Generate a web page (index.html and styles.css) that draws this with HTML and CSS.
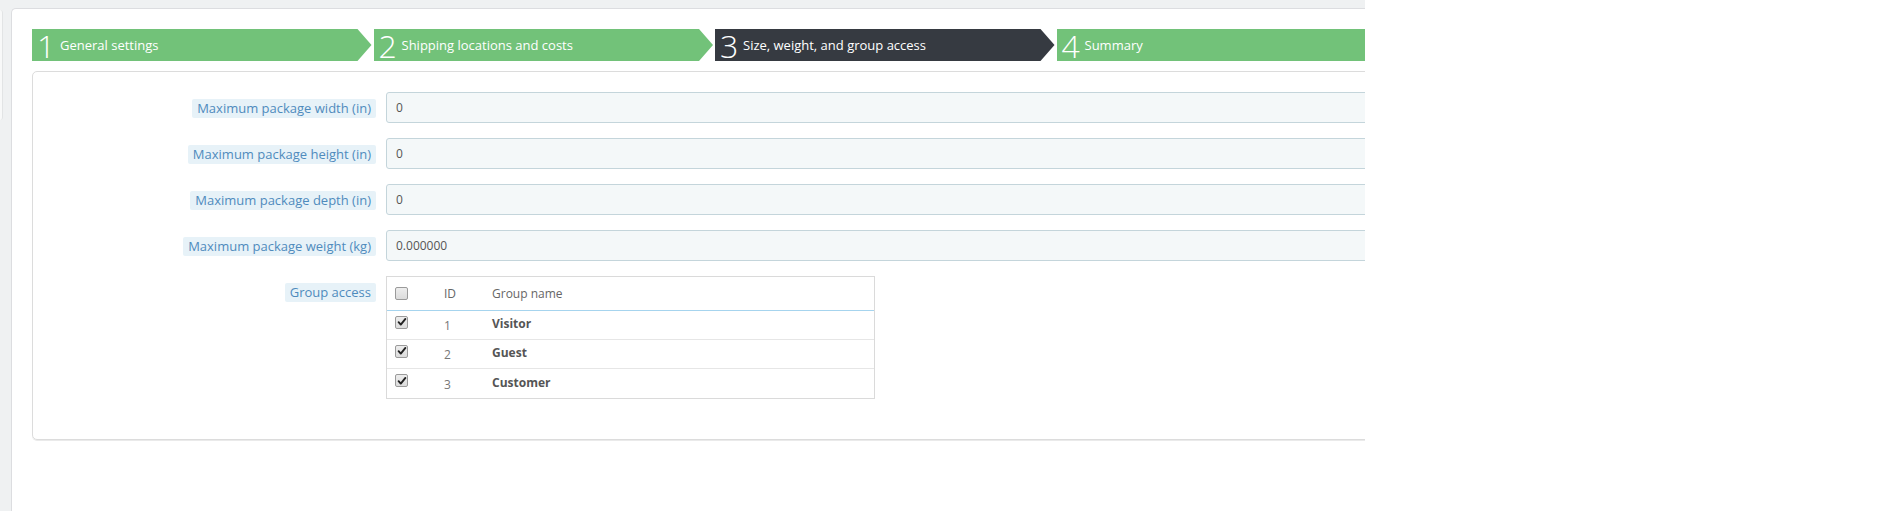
FILE: index.html
```html
<!DOCTYPE html>
<html lang="en">
<head>
<meta charset="utf-8">
<title>Carrier wizard</title>
<link rel="stylesheet" href="styles.css">
</head>
<body>
<div class="frame">
  <div class="edge"></div>
  <div class="page">
    <div class="wizard">
      <div class="step done"><span class="num">1</span><span class="txt">General settings</span></div>
      <div class="step done"><span class="num">2</span><span class="txt">Shipping locations and costs</span></div>
      <div class="step current"><span class="num">3</span><span class="txt">Size, weight, and group access</span></div>
      <div class="step done"><span class="num">4</span><span class="txt">Summary</span></div>
    </div>
    <div class="panel">
      <div class="form">
        <div class="lbl-col"><span class="lbl">Maximum package width (in)</span></div>
        <input class="field" type="text" value="0" readonly>
        <div class="lbl-col"><span class="lbl">Maximum package height (in)</span></div>
        <input class="field" type="text" value="0" readonly>
        <div class="lbl-col"><span class="lbl">Maximum package depth (in)</span></div>
        <input class="field" type="text" value="0" readonly>
        <div class="lbl-col"><span class="lbl">Maximum package weight (kg)</span></div>
        <input class="field" type="text" value="0.000000" readonly>
        <div class="lbl-col"><span class="lbl">Group access</span></div>
        <div class="tbl-wrap">
          <table class="groups">
            <colgroup><col class="c1"><col class="c2"><col></colgroup>
            <thead>
              <tr><th><span class="cb"></span></th><th>ID</th><th>Group name</th></tr>
            </thead>
            <tbody>
              <tr><td><span class="cb on"><svg viewBox="0 0 12 12" width="12" height="12"><path d="M2.6 6.2 L4.8 8.6 L9.4 2.9" fill="none" stroke="#222" stroke-width="1.9" stroke-linecap="round" stroke-linejoin="round"/></svg></span></td><td class="id"><span>1</span></td><td class="name">Visitor</td></tr>
              <tr><td><span class="cb on"><svg viewBox="0 0 12 12" width="12" height="12"><path d="M2.6 6.2 L4.8 8.6 L9.4 2.9" fill="none" stroke="#222" stroke-width="1.9" stroke-linecap="round" stroke-linejoin="round"/></svg></span></td><td class="id"><span>2</span></td><td class="name">Guest</td></tr>
              <tr class="last"><td><span class="cb on"><svg viewBox="0 0 12 12" width="12" height="12"><path d="M2.6 6.2 L4.8 8.6 L9.4 2.9" fill="none" stroke="#222" stroke-width="1.9" stroke-linecap="round" stroke-linejoin="round"/></svg></span></td><td class="id"><span>3</span></td><td class="name">Customer</td></tr>
            </tbody>
          </table>
        </div>
      </div>
    </div>
  </div>
</div>
</body>
</html>
```
FILE: styles.css
```css
html, body {
  margin: 0;
  padding: 0;
  background: #ffffff;
}
body {
  font-family: "Open Sans", "Liberation Sans", sans-serif;
  font-size: 12px;
  color: #555555;
}
.frame {
  width: 1365px;
  height: 511px;
  background: #eff1f2;
  display: flex;
  overflow: hidden;
}
.edge {
  flex: none;
  width: 2px;
  height: 110px;
  margin-top: 10px;
  margin-right: 8px;
  background: #f8f9f9;
  border-right: 1px solid #e2e4e5;
  border-radius: 0 3px 3px 0;
}
.page {
  flex: none;
  width: 1420px;
  margin-top: 8px;
  background: #ffffff;
  border-top: 1px solid #dcdde0;
  border-left: 1px solid #dcdde0;
  border-top-left-radius: 5px;
  padding: 20px 0 0 20px;
}
.wizard {
  display: flex;
  gap: 2px;
  height: 32px;
}
.step {
  flex: 0 0 339.5px;
  height: 32px;
  display: flex;
  align-items: center;
  background: #72c279;
  color: #ffffff;
  clip-path: polygon(0 0, calc(100% - 14px) 0, 100% 50%, calc(100% - 14px) 100%, 0 100%);
}
.step.current {
  background: #363a41;
}
.num {
  font-size: 32px;
  font-weight: 300;
  line-height: 32px;
  padding-left: 5px;
  margin-top: 2px;
  width: 23px;
}
.txt {
  font-size: 13px;
  line-height: 16px;
}
.panel {
  margin-top: 10px;
  width: 1400px;
  border: 1px solid #dcdcdc;
  border-radius: 5px;
  padding: 20px 0 40px 0;
  box-shadow: 0 1px 0 #eaeaea;
}
.form {
  display: grid;
  grid-template-columns: 343px 1fr;
  column-gap: 10px;
  row-gap: 15px;
  align-items: start;
}
.lbl-col {
  text-align: right;
  padding-top: 7px;
}
.lbl {
  display: inline-block;
  background: #e7f2f8;
  color: #4f8bbd;
  font-size: 13px;
  line-height: 19px;
  height: 19px;
  padding: 0 5px;
  border-radius: 2px;
}
.field {
  display: block;
  box-sizing: border-box;
  width: 100%;
  height: 31px;
  margin: 0;
  padding: 0 9px;
  border: 1px solid #c4d5db;
  border-radius: 3px;
  background: #f4f8f9;
  font-family: "Open Sans", "Liberation Sans", sans-serif;
  font-size: 12px;
  color: #555555;
  outline: none;
}
.tbl-wrap {
  display: block;
}
.groups {
  width: 489px;
  box-sizing: border-box;
  border: 1px solid #dadada;
  border-spacing: 0;
  border-collapse: separate;
  table-layout: fixed;
  font-size: 12px;
  line-height: 16px;
}
.groups col.c1 { width: 49px; }
.groups col.c2 { width: 48px; }
.groups th {
  box-sizing: border-box;
  height: 34px;
  padding: 0 0 0 8px;
  text-align: left;
  font-weight: 400;
  color: #666666;
  border-bottom: 1px solid #a6d4ee;
  vertical-align: middle;
}
.groups td {
  box-sizing: border-box;
  height: 29px;
  padding: 0 0 2px 8px;
  border-bottom: 1px solid #e6e6e6;
  vertical-align: middle;
  color: #555555;
}
.groups tr.last td {
  height: 29px;
  border-bottom: none;
}
.groups td.id span {
  position: relative;
  top: 2px;
  color: #777777;
}
.groups td.name {
  font-weight: 700;
  color: #555555;
}
.cb {
  display: block;
  box-sizing: border-box;
  width: 13px;
  height: 13px;
  border: 1px solid #9a9a9a;
  border-radius: 2px;
  background: linear-gradient(#ededed, #dcdcdc);
  position: relative;
}
.groups td .cb {
  top: -2px;
}
.cb svg {
  position: absolute;
  left: -0.5px;
  top: -0.5px;
}
```
